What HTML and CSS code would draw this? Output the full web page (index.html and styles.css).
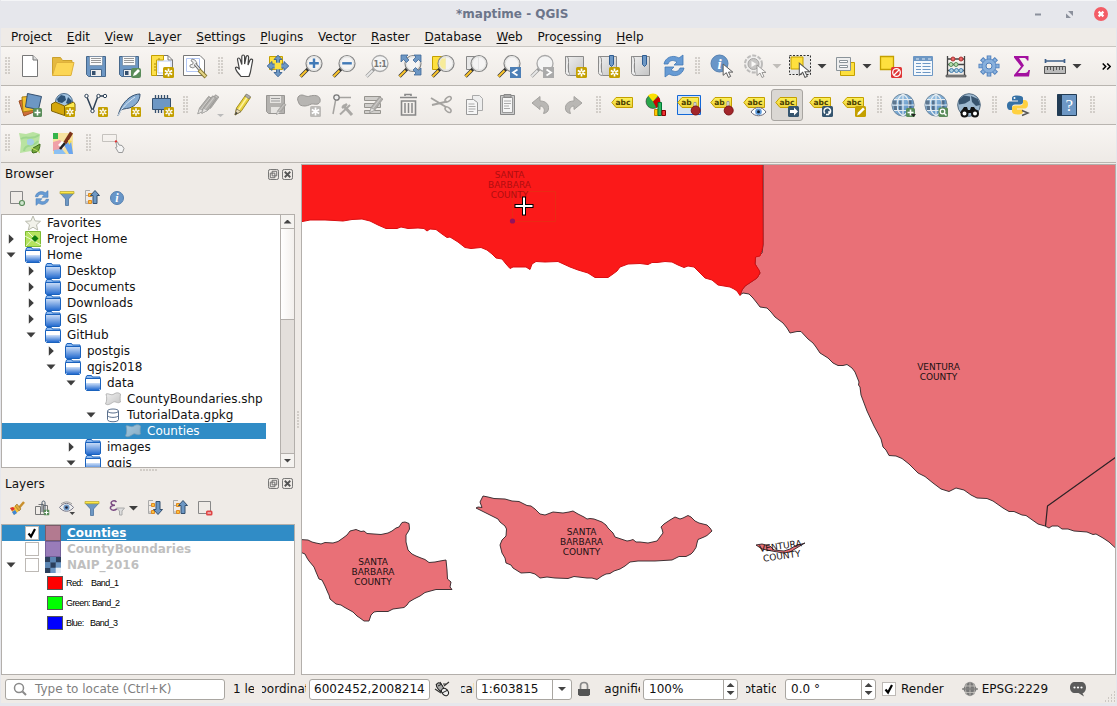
FILE: index.html
```html
<!DOCTYPE html>
<html lang="en">
<head>
<meta charset="utf-8">
<title>*maptime - QGIS</title>
<link rel="stylesheet" href="styles.css">
</head>
<body>
<svg class="defs" width="0" height="0" aria-hidden="true">
  <defs>
    <linearGradient id="gFolder" x1="0" y1="0" x2="0" y2="1"><stop offset="0" stop-color="#cfe0f8"/><stop offset="1" stop-color="#2169cf"/></linearGradient>
    <linearGradient id="gGlobe" x1="0" y1="0" x2="1" y2="1"><stop offset="0" stop-color="#b8d8ee"/><stop offset="1" stop-color="#3c7ab8"/></linearGradient>
    <linearGradient id="gGrey" x1="0" y1="0" x2="1" y2="1"><stop offset="0" stop-color="#f0f0f0"/><stop offset="1" stop-color="#c4c4c4"/></linearGradient>
    <linearGradient id="gTag" x1="0" y1="0" x2="0" y2="1"><stop offset="0" stop-color="#fdf25a"/><stop offset="1" stop-color="#edd03c"/></linearGradient>
  </defs>
  <symbol id="star" viewBox="0 0 11 11"><rect width="11" height="11" rx="1.500" fill="#c4a000"/><path d="M5.500 1.500v8M1.800 3.500l7.400 4M9.200 3.500l-7.400 4" stroke="#fff" stroke-width="1.700"/><circle cx="5.500" cy="5.500" r="1" fill="#c4a000"/></symbol>
  <symbol id="plusb" viewBox="0 0 9 9"><rect width="9" height="9" rx="1.500" fill="#5a8c5a"/><path d="M4.500 1.500v6M1.500 4.500h6" stroke="#fff" stroke-width="1.600"/></symbol>
  <symbol id="floppy" viewBox="0 0 24 24"><path d="M2.500 2.500h19v20H4.500l-2-2z" fill="#6d97c4" stroke="#47688c"/><path d="M5.500 2.500h13v9h-13z" fill="#fafafa" stroke="#667c94" stroke-width=".6"/><path d="M7 4.500h10M7 6.500h10M7 8.500h10" stroke="#999"/><path d="M6.500 15.500h11v7h-11z" fill="#eee" stroke="#47688c"/><path d="M8 17h3.500v4H8z" fill="#35506f"/></symbol>
  <symbol id="handle" viewBox="0 0 24 24"><path d="M1.500 22.500l8-8" stroke="#333" stroke-width="3.400"/><path d="M1.500 22.500l6-6" stroke="#fcc62c" stroke-width="2"/></symbol>
  <symbol id="lens" viewBox="0 0 24 24"><use href="#handle"/><circle cx="15" cy="9.500" r="8" fill="#f4f4f4" fill-opacity=".85" stroke="#858585" stroke-width="1.200"/><circle cx="15" cy="9.500" r="6.700" fill="none" stroke="#e0e0de"/></symbol>
  <symbol id="glens" viewBox="0 0 24 24"><path d="M1.500 22.500l8-8" stroke="#999" stroke-width="3.200"/><path d="M1.500 22.500l6-6" stroke="#e8e8e8" stroke-width="1.800"/><circle cx="15" cy="9.500" r="8" fill="#f4f4f4" stroke="#a8a8a8" stroke-width="1.300"/></symbol>
  <symbol id="refresh" viewBox="0 0 24 24"><path d="M2 10C3 4 10 0 17 4l4-3v10H12l3-3c-5-3-8-1-9 2z" fill="#679bd4" stroke="#4278b5" stroke-width=".8"/><path d="M22 14c-1 6-8 10-15 6l-4 3V13h9l-3 3c5 3 8 1 9-2z" fill="#679bd4" stroke="#4278b5" stroke-width=".8"/></symbol>
  <symbol id="tag" viewBox="0 0 24 24"><path d="M.8 9.500L5 4.500h16.500v10H5z" fill="url(#gTag)" stroke="#c4a000"/></symbol>
  <symbol id="cursor" viewBox="0 0 12 14"><path d="M1 1v10.500l3-2.500 2 4.500 2-1-2-4h4z" fill="#fff" stroke="#555" stroke-width=".9"/></symbol>
  <symbol id="globe" viewBox="0 0 24 24"><circle cx="12" cy="12" r="11.500" fill="#d8dde2"/><circle cx="12" cy="12" r="11" fill="url(#gGlobe)" stroke="#71899e"/><path d="M3 6.500h18M1 12h22M3 17.500h18M12 1v22M12 1C4 6 4 18 12 23M12 1c8 5 8 17 0 22" fill="none" stroke="#e7edf1" stroke-width="1.200"/><path d="M2 7.500h3.500v4H2zM2.500 13h3.500v4H3zM8 7.500h2.500v4H8zM8 13h2.500v4H8zM17.500 7.500h3v4h-3zM17.500 13h3v4h-3z" fill="#39485a" opacity=".6"/></symbol>
  <symbol id="folder" viewBox="0 0 16 16"><path d="M1 4V2l1-1.500h4.500l1 1.500H15v2z" fill="#8ab8f0" stroke="#1a62bd"/><path d="M.5 3.500h15V14.500l-1 1h-13l-1-1z" fill="url(#gFolder)" stroke="#1a62bd"/></symbol>
  <symbol id="folderOpen" viewBox="0 0 16 16"><path d="M1 4V2l1-1.500h4.500l1 1.500H15v2z" fill="#8ab8f0" stroke="#1a62bd"/><path d="M.5 3.500h15V14.500l-1 1h-13l-1-1z" fill="#fff" stroke="#1a62bd"/><path d="M1 8h14v6l-1 1H2l-1-1z" fill="url(#gFolder)"/></symbol>
  <symbol id="poly" viewBox="0 0 16 16"><path d="M1 3c3-1 5 2 8 0s5-1 6.500 0c-.5 4-.5 6 0 8-3 2-5-1-7 0s-5 4-8 2C2 10 2 6 1 3z" fill="url(#gGrey)" stroke="#aaa" stroke-width=".8"/></symbol>
  <symbol id="funnel" viewBox="0 0 16 16"><path d="M1 3h14L9.500 9v6.500h-3V9z" fill="#6d97c4" stroke="#4b739f" stroke-width=".8"/><path d="M1 1.500h14v2.200H1z" fill="#fee746" stroke="#b6a62c" stroke-width=".7"/></symbol>
  <symbol id="right" viewBox="0 0 10 10"><path d="M2.800.3l5 4.700-5 4.700z" fill="#3d3d3d"/></symbol>
  <symbol id="down" viewBox="0 0 10 10"><path d="M.5 2.500h9L5 7.500z" fill="#3d3d3d"/></symbol>
  <symbol id="float" viewBox="0 0 12 12"><rect x=".5" y=".5" width="11" height="11" rx="2" fill="none" stroke="#666"/><path d="M4.500 2.500h5v5h-5zM2.500 4.500h5v5h-5z" fill="none" stroke="#666"/></symbol>
  <symbol id="close" viewBox="0 0 12 12"><rect x=".5" y=".5" width="11" height="11" rx="2" fill="none" stroke="#666"/><path d="M3 3l6 6M9 3L3 9" stroke="#555" stroke-width="2"/></symbol>
  <symbol id="pencil" viewBox="0 0 24 24"><path d="M3 22l1.500-7L14 1.500l4.500 3L9 18.500z" fill="#e8d23e" stroke="#9d8717" stroke-width=".9"/><path d="M6.500 17L16 3" stroke="#fff3a0" stroke-width="1.500"/><path d="M3 22l1.500-6L9 18.500z" fill="#eadcb9" stroke="#6c6450" stroke-width=".7"/><path d="M3 22l1-3 1.800 1z" fill="#333"/><path d="M13 3l1.500-2 4 2.500L17 6z" fill="#aaa" stroke="#777" stroke-width=".7"/></symbol>
  <symbol id="gpencil" viewBox="0 0 24 24"><path d="M1 22l2-7L14 1l4.500 3L8 18.500z" fill="#b0aeab" stroke="#989693"/><path d="M5 16.500L15.500 3" stroke="#cfcdca" stroke-width="1.400"/><path d="M1 22l2-6 5 2.500z" fill="#e6e4e1" stroke="#999" stroke-width=".6"/></symbol>
  <symbol id="treeb" viewBox="0 0 16 16"><path d="M6 .5H1.500v13H6M1.500 5.500H5M1.500 12H5" fill="none" stroke="#aaa"/><path d="M4.500 3.500h3v3h-3zM4.500 10.500h3v3h-3z" fill="#fac43c" stroke="#e08822"/></symbol>
</svg>

<div class="window">
  <header class="titlebar">
    <span class="caption">*maptime - QGIS</span>
    <span class="winbtns">
      <svg width="12" height="14"><path d="M3 7.500h6" stroke="#8b909c" stroke-width="2"/></svg>
      <svg width="12" height="14"><path d="M5 4h5v5zM3 6.500V11h5z" fill="#8b909c"/></svg>
      <svg width="14" height="14"><circle cx="7" cy="7" r="7" fill="#f35d66"/><path d="M4.600 4.600l4.800 4.800M9.400 4.600L4.600 9.400" stroke="#fff" stroke-width="2.200"/></svg>
    </span>
  </header>

  <nav class="menubar">
    <span>Pro<u>j</u>ect</span><span><u>E</u>dit</span><span><u>V</u>iew</span><span><u>L</u>ayer</span><span><u>S</u>ettings</span><span><u>P</u>lugins</span><span>Vect<u>o</u>r</span><span><u>R</u>aster</span><span><u>D</u>atabase</span><span><u>W</u>eb</span><span>Pro<u>c</u>essing</span><span><u>H</u>elp</span>
  </nav>

  <div class="toolbar">
    <i class="grip first"></i>
    <b class="tool"><svg viewBox="0 0 24 24"><path d="M4.500 1.500H15L19.500 6v16.500h-15z" fill="#fff" stroke="#777"/><path d="M15 1.500V6h4.500" fill="#ddd" stroke="#777"/></svg></b>
    <b class="tool"><svg viewBox="0 0 24 24"><path d="M1.500 21V3.500h8l2 3h9.500V12z" fill="#e5b93f" stroke="#caa02d"/><path d="M1.500 21.500l4-13h17.500l-3 13z" fill="#fcd655" stroke="#dfb13b"/></svg></b>
    <b class="tool"><svg viewBox="0 0 24 24"><use href="#floppy"/></svg></b>
    <b class="tool"><svg viewBox="0 0 24 24"><use href="#floppy"/><rect x="14" y="14" width="10" height="10" rx="2" fill="#5a8c5a"/><path d="M16 22l1-3 4-4 2 2-4 4z" fill="#fff"/></svg></b>
    <b class="tool"><svg viewBox="0 0 24 24"><path d="M4.500 1.500H18l4.500 4.500v15.500h-18z" fill="#fff" stroke="#777"/><path d="M18 1.500V6h4.500" fill="none" stroke="#777"/><path d="M8 7h13v12H8z" fill="#fff" stroke="#9eb8f0" stroke-width=".7"/><path d="M1.500 1.500h12v4.500H6.500v15.500h-5z" fill="#fde04b" stroke="#c4a000"/><path d="M4 10h2M4 13h2M4 16h2M9 4v2" stroke="#a88c10"/><use href="#star" x="13" y="13" width="11" height="11"/></svg></b>
    <b class="tool"><svg viewBox="0 0 24 24"><path d="M.5 1.500H17l4.500 4.500v15.500H.5z" fill="#fff" stroke="#777"/><path d="M3.500 4.500h13v13h-13z" fill="none" stroke="#9eb8f0" stroke-width=".8"/><path d="M9 5l3 1 2 3-1 3-3 2-3-1 0-2 3-1 0-2-2-1z" fill="#eee" stroke="#777" stroke-width=".8"/><path d="M12 10l5 6" stroke="#555" stroke-width="3"/><path d="M12 10l5 6" stroke="#ddd" stroke-width="1.500"/><path d="M16 16l7 7" stroke="#8b7b30" stroke-width="4"/><path d="M16.500 16.500l6 6" stroke="#e7d78b" stroke-width="2"/></svg></b>
    <i class="grip g17"></i>
    <b class="tool"><svg viewBox="0 0 24 24"><path d="M8 22.500c-2-3-6-6-5.500-9 1.500-1 3 .5 4 2L4.500 5.500c0-2 2-2 2.700 0l1.600 5V2.500c.2-2 2.600-2 2.800 0v7.500l1.500-7c.5-2 2.600-1.600 2.500.2L15 11l2-5c.8-1.600 3-1 2.600.6L18 15c-.3 3-1 5-2 7.500z" fill="#fff" stroke="#444" stroke-width="1.200"/></svg></b>
    <b class="tool"><svg viewBox="0 0 24 24"><path d="M3.500 2.500h13v13h-13z" fill="#fee03e" stroke="#c4a000"/><path d="M12 1.200l4 4.300h-2.500V10H18V7.500l4.800 4.500-4.800 4.500V14h-4.500v4.500H16l-4 4.300-4-4.300h2.500V14H6v2.500L1.200 12 6 7.500V10h4.500V5.500H8z" fill="#6d97c4" stroke="#3a6292" stroke-width=".9"/><path d="M8.700 8.700h6.600v6.600H8.700z" fill="#fee03e"/></svg></b>
    <b class="tool"><svg viewBox="0 0 24 24"><use href="#lens"/><path d="M15 4.500v9.500M10.200 9.300h9.600" stroke="#417ab7" stroke-width="2.400"/></svg></b>
    <b class="tool"><svg viewBox="0 0 24 24"><use href="#lens"/><path d="M10.200 9.300h9.600" stroke="#417ab7" stroke-width="2.400"/></svg></b>
    <b class="tool"><svg viewBox="0 0 24 24"><use href="#glens"/><text x="15" y="12.500" class="one">1:1</text></svg></b>
    <b class="tool"><svg viewBox="0 0 24 24"><use href="#lens"/><path d="M3 1h7L8 3l3 3-2.500 2.500-3-3L3 8zM23 1h-7l2 2-3 3 2.500 2.500 3-3L23 8zM23 21h-7l2-2-3-3 2.500-2.500 3 3L23 14z" fill="#6d97c4" stroke="#3f6797" stroke-width=".8"/></svg></b>
    <b class="tool"><svg viewBox="0 0 24 24"><path d="M1.500 2.500h13v13h-13z" fill="#fee03e" stroke="#c4a000"/><use href="#lens"/><path d="M11 4.500h3.500v10.500c-3 0-5-1.500-5.700-5C9 7 10 5.500 11 4.500z" fill="#f7ec9a"/></svg></b>
    <b class="tool"><svg viewBox="0 0 24 24"><path d="M2.500 2.500h12v13h-12z" fill="#e8e8e8" stroke="#888"/><use href="#lens"/></svg></b>
    <b class="tool"><svg viewBox="0 0 24 24"><use href="#lens"/><path d="M13 13h11v11H13z" fill="#4d7fb6"/><path d="M20.500 15.500L16 18.500l4.500 3" fill="none" stroke="#fff" stroke-width="1.800"/></svg></b>
    <b class="tool"><svg viewBox="0 0 24 24"><use href="#glens"/><path d="M13 13h11v11H13z" fill="#aaa"/><path d="M16.500 15.500l4.500 3-4.500 3" fill="none" stroke="#fff" stroke-width="1.800"/></svg></b>
    <b class="tool"><svg viewBox="0 0 24 24"><path d="M2.500 2.500h18v19h-14z" fill="url(#gGrey)" stroke="#8a8a8a"/><path d="M2.500 2.500c3 0 3 2 3 6v10M2.500 2.500v16c0 2 2 3 4 3" fill="#eee" stroke="#8a8a8a"/><use href="#star" x="13" y="13" width="11" height="11"/></svg></b>
    <b class="tool"><svg viewBox="0 0 24 24"><path d="M2.500 2.500h18v19h-14z" fill="url(#gGrey)" stroke="#8a8a8a"/><path d="M2.500 2.500c3 0 3 2 3 6v10M2.500 2.500v16c0 2 2 3 4 3" fill="#eee" stroke="#8a8a8a"/><path d="M13.500 1.500h4v9l-2 2-2-2z" fill="#6d97c4" stroke="#2e5c91"/><use href="#star" x="13" y="13" width="11" height="11"/></svg></b>
    <b class="tool"><svg viewBox="0 0 24 24"><path d="M2.500 2.500h18v19h-14z" fill="url(#gGrey)" stroke="#8a8a8a"/><path d="M2.500 2.500c3 0 3 2 3 6v10M2.500 2.500v16c0 2 2 3 4 3" fill="#eee" stroke="#8a8a8a"/><path d="M13.500 1.500h4v9l-2 2-2-2z" fill="#6d97c4" stroke="#2e5c91"/></svg></b>
    <b class="tool"><svg viewBox="0 0 24 24"><use href="#refresh"/></svg></b>
    <i class="grip g15"></i>
    <b class="tool"><svg viewBox="0 0 24 24"><circle cx="9.500" cy="9.500" r="8.500" fill="#6896c8" stroke="#5580b0"/><text x="9.500" y="15" class="info">i</text><use href="#cursor" x="12" y="9" width="13" height="15"/></svg></b>
    <b class="tool"><svg viewBox="0 0 24 24" opacity=".6"><circle cx="10.500" cy="10" r="8.500" fill="#eee" stroke="#999" stroke-width="2" stroke-dasharray="4 1.500"/><circle cx="10.500" cy="10" r="5.500" fill="#aaa" stroke="#777"/><path d="M8.500 7l5 3-5 3z" fill="#fff"/><use href="#cursor" x="13" y="10" width="12" height="14"/></svg></b>
    <i class="drop off"></i>
    <b class="tool"><svg viewBox="0 0 24 24"><path d="M1.500 1.500h21v19h-21z" fill="#e5e5e5" stroke="#333" stroke-dasharray="2 1.500"/><path d="M3 3h12v12H3z" fill="#fee03e" stroke="#c4a000"/><use href="#cursor" x="10" y="8" width="14" height="16"/></svg></b>
    <i class="drop"></i>
    <b class="tool"><svg viewBox="0 0 24 24"><path d="M7.500 8.500h14v13h-14z" fill="#fee03e" stroke="#c4a000"/><path d="M3.500 3.500h14v13h-14z" fill="#eee" stroke="#8a9399"/><path d="M6.500 6.500h8v2h-8zM6.500 11.500h8v2h-8z" fill="#fff" stroke="#8a9399"/></svg></b>
    <i class="drop"></i>
    <b class="tool"><svg viewBox="0 0 24 24"><path d="M2.500 2.500h13v13h-13z" fill="#fee03e" stroke="#c4a000" stroke-width="1.300"/><rect x="13" y="13" width="11" height="11" rx="1.500" fill="#df3535"/><circle cx="18.500" cy="18.500" r="3.800" fill="none" stroke="#fff" stroke-width="1.300"/><path d="M16 21l5-5" stroke="#fff" stroke-width="1.300"/></svg></b>
    <b class="tool"><svg viewBox="0 0 24 24"><path d="M2.500 2.500h19v19h-19z" fill="#f4f8fc" stroke="#6d97c4"/><path d="M3 3h18v4H3z" fill="#6d97c4"/><path d="M5 5h3M11 5h3M17 5h3" stroke="#dfeaf5"/><path d="M5 9.500h5M5 12.500h5M5 15.500h5M5 18.500h5M11.500 9.500h8M11.500 12.500h8M11.500 15.500h8M11.500 18.500h8" stroke="#6d97c4"/></svg></b>
    <b class="tool"><svg viewBox="0 0 24 24"><path d="M3.500 2v20M20.500 2v20M3 5h18M3 10.500h18M3 16.500h18" fill="none" stroke="#444" stroke-width="1.300"/><path d="M2 21h20v2H2z" fill="#888" stroke="#444" stroke-width=".6"/><circle cx="9" cy="5" r="2" fill="#e66" stroke="#a33"/><circle cx="17" cy="5" r="2" fill="#e66" stroke="#a33"/><circle cx="7" cy="10.500" r="2" fill="#b7dfb0" stroke="#5a8c5a"/><circle cx="12" cy="10.500" r="2" fill="#b7dfb0" stroke="#5a8c5a"/><circle cx="7.500" cy="16.500" r="2" fill="#acd" stroke="#4682b4"/><circle cx="12.500" cy="16.500" r="2" fill="#acd" stroke="#4682b4"/><circle cx="17" cy="16.500" r="2" fill="#acd" stroke="#4682b4"/></svg></b>
    <b class="tool"><svg viewBox="0 0 24 24"><path d="M12 1.500v21M1.500 12h21M4.600 4.600l14.800 14.800M19.400 4.600L4.600 19.400" stroke="#4d7ebb" stroke-width="4.600"/><path d="M12 2.300v19.400M2.300 12h19.400M5.200 5.200l13.600 13.600M18.800 5.200L5.200 18.800" stroke="#88b0dc" stroke-width="2.800"/><circle cx="12" cy="12" r="7" fill="#88b0dc" stroke="#4d7ebb" stroke-width=".7"/><circle cx="12" cy="12" r="3" fill="#f3f0ec" stroke="#4d7ebb"/></svg></b>
    <b class="tool"><svg viewBox="0 0 24 24"><path d="M4 2h14.500v4.500H17C16.500 4.500 15.500 4 13 4H9l5 7.500L8 19h7c2 0 3-1 3.500-3H20l-1 6.500H4V21l7-8.500L4 3.500z" fill="#a3109f"/></svg></b>
    <b class="tool"><svg viewBox="0 0 24 24"><path d="M2 7h20M2.500 5v4M21.500 5v4" stroke="#3d5f89" stroke-width="1.700"/><path d="M1.500 12.500h21v7h-21z" fill="#bbb" stroke="#555"/><path d="M4.500 13v3M7.500 13v3M10.500 13v4M13.500 13v3M16.500 13v3M19.500 13v3" stroke="#555"/></svg></b>
    <i class="drop"></i>
    <span class="more"><svg width="9" height="7"><path d="M.7.500l3 3-3 3M5.200.500l3 3-3 3" fill="none" stroke="#000" stroke-width="1.500"/></svg></span>
  </div>

  <div class="toolbar">
    <i class="grip first"></i>
    <b class="tool"><svg viewBox="0 0 24 24"><path d="M1 8l7-2 8 13-10 4z" fill="#cf6e3a" stroke="#9c4d23"/><path d="M4 4l12-1 1 14-12 2z" fill="#f4c12f" stroke="#a77c10"/><path d="M9.500.5l14 3-3 13-13-2.500z" fill="#6d97c4" stroke="#35506f"/><use href="#plusb" x="15" y="15" width="9" height="9"/></svg></b>
    <b class="tool"><svg viewBox="0 0 24 24"><circle cx="13" cy="9" r="8.500" fill="#a3c5e3" stroke="#4e6d8b"/><path d="M6 6l4-4 4 1 1 4-4 3-4-1zM17 4l4 4-2 4-4-2z" fill="#2e5377"/><path d="M.5 11l4-2 9 4v9.500L.5 18z" fill="#d5a70b" stroke="#7f6307"/><path d="M13.500 13l9-4 1.500 2v7l-10.500 4.500z" fill="#fce94f" stroke="#7f6307"/><use href="#star" x="14" y="14" width="10" height="10"/></svg></b>
    <b class="tool"><svg viewBox="0 0 24 24"><path d="M2.500 3l6 15L14 3h7" fill="none" stroke="#2f4257" stroke-width="1.500"/><g fill="#fff" stroke="#2f4257"><circle cx="2.500" cy="3" r="1.700"/><circle cx="8.500" cy="18" r="1.700"/><circle cx="14.500" cy="3" r="1.700"/><circle cx="21" cy="3" r="1.700"/></g><use href="#star" x="14" y="14" width="10" height="10"/></svg></b>
    <b class="tool"><svg viewBox="0 0 24 24"><path d="M1 23C3 15 6 10 12 5c4-3 8-4 11-4 0 6-3 10-8 13-4 2-7 1-11 3z" fill="#88add2" stroke="#35506f"/><path d="M1 23C5 14 11 9 18 4" fill="none" stroke="#dde9f4"/><use href="#star" x="14" y="14" width="10" height="10"/></svg></b>
    <b class="tool"><svg viewBox="0 0 24 24"><path d="M5.500 2v18M8.500 2v18M11.500 2v18M14.500 2v18M17.500 2v18" stroke="#35506f" stroke-width="1.300"/><path d="M2.500 5.500h18v11h-18z" fill="#6d97c4" stroke="#35506f"/><use href="#star" x="14" y="14" width="10" height="10"/></svg></b>
    <i class="grip g15"></i>
    <b class="tool"><svg viewBox="0 0 24 24"><use href="#gpencil" x="-1" y="2" width="20" height="21"/><use href="#gpencil" x="7" y="0" width="18" height="20"/><use href="#gpencil" x="3" y="1" width="20" height="22"/><path d="M19 21h7l-3.500 3z" fill="#bbb"/></svg></b>
    <b class="tool"><svg viewBox="0 0 24 24"><use href="#pencil" x="1"  width="24" height="24"/></svg></b>
    <b class="tool"><svg viewBox="0 0 24 24"><path d="M2.500 2.500h18v18h-16l-2-2z" fill="#b4b2af" stroke="#989693"/><path d="M6 3h11v7H6zM7 14h10v6H7z" fill="#e6e4e1"/><path d="M7 5.500h9M7 8h9" stroke="#999"/><use href="#gpencil" x="12" y="9" width="13" height="14"/></svg></b>
    <b class="tool"><svg viewBox="0 0 24 24"><path d="M2 3c4-3 7 2 11 0 4-1 9-1 10 3s-2 6-6 5c-3-1-5 2-9 2S2 12 1.500 9C0 7 .5 4 2 3z" fill="#b7b5b2" stroke="#989693"/><rect x="13" y="13" width="11" height="11" rx="1.500" fill="#bdbbb8"/><path d="M18.500 14.500v8M14.800 16.500l7.400 4M22.200 16.500l-7.400 4" stroke="#fff" stroke-width="1.700"/></svg></b>
    <b class="tool"><svg viewBox="0 0 24 24"><path d="M6 5L3 21M6 4.500h15" stroke="#a5a3a0" stroke-width="1.500"/><circle cx="6.500" cy="4.500" r="2.700" fill="#eee" stroke="#777" stroke-width="1.300"/><path d="M10 21.500L20 12" stroke="#aaa8a5" stroke-width="1.800"/><path d="M13 12l9 10" stroke="#aaa8a5" stroke-width="3"/><path d="M12 15l5-4" stroke="#aaa8a5" stroke-width="2.500"/></svg></b>
    <b class="tool"><svg viewBox="0 0 24 24"><path d="M1.500 3.500h16v4h-16zM1.500 10.500h16v4h-16zM1.500 17.500h16v3h-16z" fill="#d0cecb" stroke="#96948f"/><use href="#gpencil" x="6" y="1" width="18" height="22"/></svg></b>
    <b class="tool"><svg viewBox="0 0 24 24"><path d="M9 3V1.500h6V3M4 4.500h17" fill="none" stroke="#888" stroke-width="1.600"/><path d="M5.500 8h14v14h-14z" fill="none" stroke="#888" stroke-width="1.600"/><path d="M9 10v10M12.500 10v10M16 10v10" stroke="#888" stroke-width="1.500"/></svg></b>
    <b class="tool"><svg viewBox="0 0 24 24"><path d="M2 5l15 9M3 12l15-3.500" stroke="#a5a3a0" stroke-width="1.900"/><ellipse cx="19.500" cy="6.500" rx="3.500" ry="2" transform="rotate(-35 19 7)" fill="none" stroke="#a5a3a0" stroke-width="1.500"/><ellipse cx="19.500" cy="16.500" rx="3.500" ry="2" transform="rotate(40 19 16)" fill="none" stroke="#a5a3a0" stroke-width="1.500"/></svg></b>
    <b class="tool"><svg viewBox="0 0 24 24"><path d="M10.500 2.500h7l3 3v12h-10z" fill="#eee" stroke="#aaa"/><path d="M4.500 6.500h7l4 3v12h-11z" fill="#f6f6f6" stroke="#999"/><path d="M6.500 11h6M6.500 13.500h7M6.500 16h7M6.500 18.500h5" stroke="#aaa"/></svg></b>
    <b class="tool"><svg viewBox="0 0 24 24"><path d="M5.500 2.500h14v19h-14z" fill="#ccc" stroke="#888"/><path d="M7.500 4.500h10v15h-10z" fill="#f6f6f6" stroke="#999"/><path d="M9 1.500h7v3H9z" fill="#aaa" stroke="#888"/><path d="M9 8h7M9 10.500h7M9 13h5M9 15.500h6" stroke="#aaa"/></svg></b>
    <b class="tool"><svg viewBox="0 0 24 24"><path d="M4 10l8-6.500V8c6 0 9 3.500 8.500 8-.5 3-2.500 4-5 4.500 2-4 0-7.500-3.500-7.500V16.500z" fill="#b9b7b4" stroke="#a5a3a0"/></svg></b>
    <b class="tool"><svg viewBox="0 0 24 24"><path d="M21 10l-8-6.500V8c-6 0-9 3.500-8.500 8 .5 3 2.500 4 5 4.500-2-4 0-7.500 3.500-7.500V16.500z" fill="#b9b7b4" stroke="#a5a3a0"/></svg></b>
    <i class="grip g17"></i>
    <b class="tool"><svg viewBox="0 0 24 24"><use href="#tag" width="24" height="24"/><text x="12" y="12" class="abc">abc</text></svg></b>
    <b class="tool"><svg viewBox="0 0 24 24"><circle cx="9" cy="8.500" r="7" fill="#2aa64a" stroke="#333" stroke-width=".6"/><path d="M9 8.500L4 2.500a7 7 0 0 1 10 0z" fill="#fce000"/><path d="M9 8.500l5.500-5a7.500 7.500 0 0 1-2 11.500z" fill="#c00"/><path d="M10.500 16.500h3.500v6h-3.500z" fill="#fcc800" stroke="#c80"/><path d="M14 9.500h3.500v13H14z" fill="#2cb560" stroke="#073"/><path d="M18 17.500h3.500v5H18z" fill="#e33" stroke="#800"/></svg></b>
    <b class="tool"><svg viewBox="0 0 24 24"><path d="M.5 2.500h23v19H.5z" fill="#d6e3f1" stroke="#1268d8"/><use href="#tag" width="24" height="24"/><text x="9.500" y="12" class="abc">ab</text><path d="M17 14V9.500h2V15" fill="#fff" stroke="#999"/><circle cx="18.700" cy="17.500" r="4.500" fill="#a3252a" stroke="#7c1518"/></svg></b>
    <b class="tool"><svg viewBox="0 0 24 24"><use href="#tag" width="24" height="24"/><text x="9.500" y="12" class="abc">ab</text><path d="M17 14V8.500h2V15" fill="#fff" stroke="#999"/><circle cx="18.700" cy="17.500" r="4.500" fill="#a3252a" stroke="#7c1518"/></svg></b>
    <b class="tool"><svg viewBox="0 0 24 24"><use href="#tag" width="24" height="24"/><text x="12" y="12" class="abc">abc</text><path d="M8 19c4-6 11-6 15 0-4 5-11 5-15 0z" fill="#fff" stroke="#667"/><circle cx="15.500" cy="18.700" r="3.300" fill="#5f9bdb"/><circle cx="15.500" cy="18.700" r="1.500" fill="#123"/></svg></b>
    <b class="tool on"><svg viewBox="0 0 24 24"><use href="#tag" width="24" height="24"/><text x="12" y="12" class="abc">abc</text><rect x="13" y="13" width="11" height="11" rx="1.500" fill="#35556f"/><path d="M15 17h4v-2.500l4 4-4 4V20h-4z" fill="#fff"/></svg></b>
    <b class="tool"><svg viewBox="0 0 24 24"><use href="#tag" width="24" height="24"/><text x="12" y="12" class="abc">abc</text><rect x="13" y="13" width="11" height="11" rx="1.500" fill="#35556f"/><path d="M16 20.500a3.300 3.300 0 1 1 4 .5v-3M20 21.500h-3" fill="none" stroke="#fff" stroke-width="1.400"/></svg></b>
    <b class="tool"><svg viewBox="0 0 24 24"><use href="#tag" width="24" height="24"/><text x="12" y="12" class="abc">abc</text><rect x="13" y="13" width="11" height="11" rx="1.500" fill="#c4a000"/><path d="M15 22.500l1-3 5-5 1.800 1.800-5 5z" fill="#fff"/></svg></b>
    <i class="grip g16"></i>
    <b class="tool"><svg viewBox="0 0 24 24"><use href="#globe"/><use href="#plusb" x="15" y="15" width="9" height="9"/><path d="M20 21h5l-2.500 3z" fill="#222"/></svg></b>
    <b class="tool"><svg viewBox="0 0 24 24"><use href="#globe"/><rect x="14.500" y="14.500" width="9.500" height="9.500" rx="1.500" fill="#5a8c5a"/><circle cx="18.500" cy="18.500" r="2.300" fill="none" stroke="#fff" stroke-width="1.300"/><path d="M20 20l2.500 2.500" stroke="#fff" stroke-width="1.500"/></svg></b>
    <b class="tool"><svg viewBox="0 0 24 24"><circle cx="12" cy="12" r="11.300" fill="#9db8cf" stroke="#526a80"/><path d="M2 6.500l5-4 6 1v4l-5 3-6 1zM14 3l7 3 2 6-4 1-4-4z" fill="#27425d" opacity=".85"/><path d="M3 20l4-6h3l1 3h2l1-3h3l4 6" fill="#111"/><circle cx="7.500" cy="20.500" r="3" fill="#fff" stroke="#111" stroke-width="2"/><circle cx="18" cy="20.500" r="3" fill="#fff" stroke="#111" stroke-width="2"/></svg></b>
    <i class="grip g16"></i>
    <b class="tool"><svg viewBox="0 0 24 24"><path d="M11 2.500c-4 0-5 1-5 3V7.500h6v1H4.500c-3 0-3.500 2.500-3.500 4.500s1 4 3 4h2v-2.500c0-2 1-3 3-3h5c2 0 3-1 3-2.500V5c0-1.500-2-2.500-6-2.500z" fill="#3671a5"/><path d="M12 21.500c4 0 5-1 5-3V16.500h-6v-1h7.500c3 0 3.500-2.500 3.500-4.500s-1-4-3.500-4h-1.500V9.500c0 2-1 3-3 3h-5c-2 0-3 1-3 2.500v3.500c0 2 2 3 6 3z" fill="#ffd140"/><circle cx="8.500" cy="5" r="1" fill="#fff"/><path d="M16 17.500l6 2.500-6 2.500" fill="none" stroke="#555" stroke-width="1.400"/></svg></b>
    <i class="grip g16"></i>
    <b class="tool"><svg viewBox="0 0 24 24"><path d="M2.500 1.500h19v21h-19z" fill="#6d97c4" stroke="#223c55"/><path d="M2.500 1.500h4.500v21H2.500z" fill="#223c55"/><text x="14.300" y="18" class="help">?</text></svg></b>
    <i class="grip g16"></i>
  </div>

  <div class="toolbar third">
    <i class="grip first"></i>
    <b class="tool"><svg viewBox="0 0 24 24"><path d="M1 2l7 1 7-2 7 2-1 9 1 9-9-1-11 2 1-10z" fill="#b9e3a1"/><path d="M3 8c5-4 10 2 18-4M6 20c1-8 9-3 14-10" stroke="#9ed68e" fill="none" stroke-width="2"/><path d="M9 9c4-3 8 0 7 3s-5 3-7 1z" fill="#a5cfe6"/><path d="M14 21c0-3 1-5 3-5l5-3c0 4-1 6-3 8l-4 1z" fill="#74a83c" stroke="#3f6b1b"/><path d="M13 17l5 2 4 3" stroke="#c5dd62" fill="none"/></svg></b>
    <b class="tool"><svg viewBox="0 0 24 24"><path d="M2 2h20v21H2z" fill="#f7e3a0"/><path d="M2 2h5v6H2z" fill="#34b44a"/><path d="M2 11l7-2 5 6-4 5H2z" fill="#f0a0a8"/><path d="M7 14l4-4 4 3-3 5z" fill="#fff"/><path d="M13 14l7-4 2 13h-4z" fill="#6aa5f0"/><path d="M3 19l8-1 4 5H3z" fill="#8cc0f2"/><path d="M20.500 1.500L14 12" stroke="#7c331b" stroke-width="3.600"/><path d="M14 12l-5 6" stroke="#222" stroke-width="2.600"/><path d="M17 9l4 1-3 4z" fill="#f4dc52"/></svg></b>
    <i class="grip g17"></i>
    <b class="tool"><svg viewBox="0 0 24 24"><path d="M1.500 3.500h14v7h-14z" fill="none" stroke="#c5c2be"/><circle cx="15" cy="10.500" r="1.200" fill="#d33"/><path d="M15 12l1 4-1.500.5 3 5h4l1.500-4-2-3-3-.5-1.500-3z" fill="#f4f4f4" stroke="#999"/></svg></b>
  </div>

  <main class="work">
    <aside class="side">
      <div class="dockhead"><span>Browser</span><svg><use href="#float"/></svg><svg><use href="#close"/></svg></div>
      <div class="docktools">
        <svg viewBox="0 0 16 16"><path d="M1.500 1.500h12v12h-12z" fill="none" stroke="#888"/><circle cx="13" cy="13" r="2.500" fill="#cfe5cf" stroke="#5a8c5a" stroke-width="1.200"/></svg>
        <svg viewBox="0 0 24 24"><use href="#refresh"/></svg>
        <svg viewBox="0 0 16 16"><use href="#funnel"/></svg>
        <svg viewBox="0 0 16 16"><use href="#treeb"/><path d="M11 .5l4.500 5H13v8H9v-8H6.500z" fill="#6d97c4" stroke="#35506f"/></svg>
        <svg viewBox="0 0 16 16"><circle cx="8" cy="8" r="6.500" fill="#6896c8" stroke="#5580b0"/><text x="8" y="12.300" class="info small">i</text></svg>
      </div>
      <section class="browser">
        <div class="tree">
          <div class="row l0"><i class="tw"></i><svg class="ic" viewBox="0 0 16 16"><path d="M8 1l2.100 4.900 5.400.4-4 3.500 1.200 5.200L8 12.200 3.300 15l1.200-5.200-4-3.500 5.400-.4z" fill="#f2f2ea" stroke="#b9bbae"/></svg>Favorites</div>
          <div class="row l0"><svg class="tw"><use href="#right"/></svg><svg class="ic" viewBox="0 0 16 16"><path d="M.5.500h15v15H.5z" fill="#b4e35e" stroke="#7dbb33"/><path d="M0 5l16 9M1 15L11 4M3 1l6 6" stroke="#e9f7cf"/><path d="M10 4l3.500 3.500L10 11 6.500 7.500z" fill="#0d7d0d"/></svg>Project Home</div>
          <div class="row l0"><svg class="tw"><use href="#down"/></svg><svg class="ic"><use href="#folderOpen"/></svg>Home</div>
          <div class="row l1"><svg class="tw"><use href="#right"/></svg><svg class="ic"><use href="#folder"/></svg>Desktop</div>
          <div class="row l1"><svg class="tw"><use href="#right"/></svg><svg class="ic"><use href="#folder"/></svg>Documents</div>
          <div class="row l1"><svg class="tw"><use href="#right"/></svg><svg class="ic"><use href="#folder"/></svg>Downloads</div>
          <div class="row l1"><svg class="tw"><use href="#right"/></svg><svg class="ic"><use href="#folder"/></svg>GIS</div>
          <div class="row l1"><svg class="tw"><use href="#down"/></svg><svg class="ic"><use href="#folderOpen"/></svg>GitHub</div>
          <div class="row l2"><svg class="tw"><use href="#right"/></svg><svg class="ic"><use href="#folder"/></svg>postgis</div>
          <div class="row l2"><svg class="tw"><use href="#down"/></svg><svg class="ic"><use href="#folderOpen"/></svg>qgis2018</div>
          <div class="row l3"><svg class="tw"><use href="#down"/></svg><svg class="ic"><use href="#folderOpen"/></svg>data</div>
          <div class="row l4"><i class="tw"></i><svg class="ic"><use href="#poly"/></svg>CountyBoundaries.shp</div>
          <div class="row l4"><svg class="tw"><use href="#down"/></svg><svg class="ic" viewBox="0 0 16 16"><path d="M2.500 4v8.500c0 3 11 3 11 0V4" fill="#fff" stroke="#5a6f8c"/><ellipse cx="8" cy="4" rx="5.500" ry="2" fill="#fff" stroke="#5a6f8c"/><path d="M2.500 8.500c1 2.500 10 2.500 11 0" fill="none" stroke="#5a6f8c"/></svg>TutorialData.gpkg</div>
          <div class="row l5 sel"><i class="tw"></i><svg class="ic dim"><use href="#poly"/></svg>Counties</div>
          <div class="row l3"><svg class="tw"><use href="#right"/></svg><svg class="ic"><use href="#folder"/></svg>images</div>
          <div class="row l3"><svg class="tw"><use href="#down"/></svg><svg class="ic"><use href="#folderOpen"/></svg>qgis</div>
        </div>
        <div class="scroll"><span class="sbtn"><i class="up"></i></span><span class="thumb"></span><span class="sbtn end"><i class="dn"></i></span></div>
      </section>
      <div class="hsplit"></div>
      <div class="dockhead second"><span>Layers</span><svg><use href="#float"/></svg><svg><use href="#close"/></svg></div>
      <div class="docktools layers">
        <svg viewBox="0 0 16 16"><path d="M1 8l6-2 3 5-5 4z" fill="#f5c33b"/><path d="M1 8l3-1 2 2-3 2z" fill="#d33"/><path d="M3 12l3-2 2 3-3 2z" fill="#3d86d8"/><path d="M15 2L9 9" stroke="#c98f2c" stroke-width="2.500"/><path d="M6 6l4 5 2-2-4-5z" fill="#dfaa3c" stroke="#96691b" stroke-width=".6"/></svg>
        <svg viewBox="0 0 16 16"><path d="M1.500 6.500h5v8h-5zM4.500 4.500h5v8M9.500 5.500h4v9h-8" fill="none" stroke="#777"/><path d="M8 12V2.500c0-2 3-2 3 0V11" fill="none" stroke="#456"/><use href="#plusb" x="9.500" y="9.500" width="6" height="6"/></svg>
        <svg viewBox="0 0 16 16"><path d="M.5 7.500c4-5.500 10-5.500 14 0-4 5-10 5-14 0z" fill="#eee" stroke="#778"/><circle cx="7.500" cy="7.500" r="3" fill="#6f9ac8"/><circle cx="7.500" cy="7.500" r="1.300" fill="#223"/><path d="M2 4c4-3 8-2.500 11 0" fill="none" stroke="#999"/><path d="M10.500 12h5.500l-2.700 3z" fill="#444"/></svg>
        <svg viewBox="0 0 16 16"><use href="#funnel"/></svg>
        <svg viewBox="0 0 16 16"><path d="M7.500 2C5-.5 1 1.500 2.500 4c.6 1 2 1.300 3.500 1.300C3 5.300 1 6.500 1.500 8.500c1 2.500 5 2 6.500 0" fill="none" stroke="#7a4a82" stroke-width="1.500"/><path d="M7.500 8h8L13 11v4h-2.500v-4z" fill="#ddd" stroke="#aaa"/></svg>
        <i class="drop"></i>
        <svg viewBox="0 0 16 16"><use href="#treeb"/><path d="M11 14.500L6.500 9.500H9v-8h4v8h2.500z" fill="#6d97c4" stroke="#35506f"/></svg>
        <svg viewBox="0 0 16 16"><use href="#treeb"/><path d="M11 .5l4.500 5H13v8H9v-8H6.500z" fill="#6d97c4" stroke="#35506f"/></svg>
        <svg viewBox="0 0 16 16"><path d="M1.500 1.500h12v12h-12z" fill="none" stroke="#888"/><rect x="9" y="10.500" width="6.500" height="5" rx="1.500" fill="#df4545"/><path d="M10.500 13h3.500" stroke="#fff"/></svg>
      </div>
      <section class="layertree">
        <div class="lrow act"><i class="tw"></i><span class="chk on"><svg viewBox="0 0 12 12"><path d="M2.500 6.500l2.500 3L9 2" fill="none" stroke="#000" stroke-width="2.200"/></svg></span><i class="sw rose"></i><u>Counties</u></div>
        <div class="lrow"><i class="tw"></i><span class="chk"></span><i class="sw violet"></i>CountyBoundaries</div>
        <div class="lrow"><svg class="tw"><use href="#down"/></svg><span class="chk"></span><svg class="ic" viewBox="0 0 16 16"><path d="M0 0h16v16H0z" fill="#6d97c4"/><path d="M0 0h5.300v5.300H0zM10.700 0H16v5.300h-5.300zM5.300 5.300h5.400v5.400H5.300zM0 10.700h5.300V16H0z" fill="#2b3f5c"/><path d="M5.300 0h5.400v5.300H5.300zM0 5.300h5.300v5.400H0z" fill="#5c86b4"/><path d="M10.700 10.700H16V16h-5.300z" fill="#e9f0f7"/></svg>NAIP_2016</div>
        <div class="band"><i class="cb red"></i><span class="nm">Red:</span><span>Band_1</span></div>
        <div class="band"><i class="cb green"></i><span class="nm g">Green:</span><span>Band_2</span></div>
        <div class="band"><i class="cb blue"></i><span class="nm b">Blue:</span><span>Band_3</span></div>
      </section>
    </aside>
    <div class="vsplit"><i></i></div>
    <div class="canvas">
      <svg viewBox="302 165 813 509" width="813" height="509">
        <g fill="#e97077" stroke="#2d2226" stroke-width=".9" stroke-linejoin="round">
          <path d="M763 160V240L763 245 762 253 755.500 257 755 264 760 273 757 278 745 286 742 290 740 295 743 293 749 294 753 298 757 303 760 307 767 308 771 312 775 317 783 323 787 328 790 333 797 331.500 801 331.500 808 339 813 343 816 347 820 353 828 358 833 363 838 365.500 843 365.500 847 364.500 852 368 855 372 859 382 858.500 385 860 387 861 395 867 411 874 426 881 439 883 447 886 450 889 455.500 896 456 902 458.500 909 464 918 473 925 476.500 933 483 941 489 949 491.500 956 488 964 490 971 495 977 498 987 498.500 993 501 1003 508 1009 511.500 1014 511.500 1022 515 1026 515.500 1038 524 1045 526 1049 528 1052 526 1058 526 1062 529 1068 529 1074 531 1087 532 1093 534.500 1096 534 1103 538 1109 542 1116 548.500 1125 549V160z"/>
          <path d="M1116 457L1047.500 506l-2 20" fill="none" stroke-width="1.200"/>
          <path d="M300 539.500L308 540 312 542 316 543 321 544 325 542.500 333 543 338 541.500 343 538 347 535 350 531 356 529.500 361 531.500 364 531 367 533.500 381 534.500 388 533 392 531 396 528 399 527 402 522.500 405 522 409 523.500 409.500 529 408 532 406 535 406 542 408 550 412 554 416 556 421 558 425 559.500 429 562.500 435 562 440 561 446 560 447 570 447.500 579 451 582 450 587 452 589.500 436 589.500 425 592.500 420 596 414 599 409 602 407 605 404 607.500 393 609 388 611.500 377 611.500 374 612 371 615 369 621 364 621 360 618 357 616 353 612 344 607 341 605 336 604 330 599 329 595 328 593 325 586 322 580 319 579 316 572 314 567 309 561 307 558 305 554 300 552z"/>
          <path d="M476 508L478 507 482 507.500 480 502 483 496 488 497 494 498.500 505 499 512 501 519 501.500 527 505.500 531 506 535 509 540 514 545 515 549 513.500 553 512 563 513 569 512 573 511 578 514 584 517 587 519 590 518.500 594 519 602 522 606 525 608 528 613 533 615 537 621 539 627 541 630 540.500 633 539.500 636 542 640 542 648 543 657 541 660 537 663 533 662 529 661 527 664 524 670 520 675 517 680 519 683 518 688 515.500 691 517 695 521 699 523 707 525 710 528 712 531 707 535.500 704 537 698 539.500 697 543 696 547.500 693 552 691 554 686 556.500 679 556.500 672 560 655 561 638 561 630 562 625 566 620 569 614 571 610 573.500 606 574 602 576 597 579.500 592 578 587 578 574 576.500 568 578.500 555 578 547 577 540 578 535 574 530 572.500 521 573 513 568 511 565 506 563 505 558 502 553 500 545 502 540 506 536 506.500 529 505 526 500 522 498 519 488 514 480 510z"/>
          <path d="M756 545L762 544 770 546 774 550 784 551 790 549 795 546 805 543 799 546.500 790 552 783 553 772 551 762 549z"/>
        </g>
        <path d="M300 222L310 220 325 220 335 220.500 343 221 352 219.500 362 219 370 221 378 225 386 228.500 397 228.500 401 227 408 228.500 418 228 424 228.500 427 231 430 229 436 229.500 442 234 447 237.500 450 237 458 242 465 247.500 471 248.500 481 247.500 487 250 492 254 496 258 502 259 506 264 510 268.500 513 267 526 267 530 269.500 532 264 536 261.500 545 262 558 261.500 570 267 578 270 588 273 595 277.500 608 277.500 613 274 617 271 620 267 628 264 640 263.500 648 264.500 652 262.500 657 262.500 665 261.500 672 262 678 265 684 267.500 688 266 694 267 700 273 705 278 712 280 718 285 730 287 734 289 737 291 740 295.500 742 290 745 286 757 278 760 273 759 270 755 264 755.500 257 760 256 762 250 763 244 762.300 160H300z" fill="#fb1919" stroke="#d90d10"/>
        <path d="M512.500 191.500h43v30h-43z" fill="none" stroke="#ea2a14"/>
        <circle cx="512.500" cy="221" r="2.600" fill="#94125d"/>
        <g class="maplabel">
          <g fill="#b00e10"><text x="509.500" y="177.600">SANTA</text><text x="509.500" y="187.600">BARBARA</text><text x="509.500" y="197.600">COUNTY</text></g>
          <text x="373" y="564.500">SANTA</text><text x="373" y="574.500">BARBARA</text><text x="373" y="584.500">COUNTY</text>
          <text x="581.500" y="535">SANTA</text><text x="581.500" y="545">BARBARA</text><text x="581.500" y="555">COUNTY</text>
          <text x="938.500" y="370.300">VENTURA</text><text x="938.500" y="380.300">COUNTY</text>
          <g transform="rotate(-8 782 550)"><text x="781" y="549">VENTURA</text><text x="781" y="559">COUNTY</text></g>
        </g>
        <path d="M524 196.500v19M514.500 206h19" stroke="#000" stroke-width="4"/>
        <path d="M524 197.500v17M515.500 206h17" stroke="#fff" stroke-width="2"/>
      </svg>
    </div>
  </main>

  <footer class="status">
    <div class="field locate"><svg width="14" height="14" viewBox="0 0 14 14"><circle cx="6" cy="6" r="4.500" fill="none" stroke="#8a8a8a" stroke-width="1.500"/><path d="M9.500 9.500L13 13" stroke="#8a8a8a" stroke-width="2"/></svg>Type to locate (Ctrl+K)</div>
    <span class="clip legend">1 legend entries</span>
    <span class="clip mid coord">Coordinate</span>
    <div class="field xy">6002452,2008214</div>
    <svg class="sic track" viewBox="0 0 16 16"><path d="M2 3l5 8M6 1l3 6M1 8l6 4M10 5l5-4M9 3l4 0" stroke="#333" stroke-width="1.200"/><ellipse cx="6" cy="6" rx="2.700" ry="4.500" transform="rotate(-35 6 6)" fill="#aaa" stroke="#222"/><ellipse cx="11" cy="11" rx="3" ry="4" transform="rotate(-40 11 11)" fill="#eee" stroke="#222"/><path d="M8 12l6-3M4 5l4-2" stroke="#222"/></svg>
    <span class="clip mid scale">Scale</span>
    <div class="field combo"><span>1:603815</span><i class="cbtn"><i class="dn"></i></i></div>
    <svg class="sic lock" viewBox="0 0 14 16"><path d="M3.500 8V4.500c0-4 7-4 7 0V8" fill="none" stroke="#888" stroke-width="1.700"/><path d="M1 8h12v5.500l-1.500 1.500h-9L1 13.500z" fill="#555"/></svg>
    <span class="clip mid magn">Magnifier</span>
    <div class="field spin mag"><span>100%</span><i class="sp"><i class="up"></i><i class="dn"></i></i></div>
    <span class="clip mid rot">Rotation</span>
    <div class="field spin deg"><span>0.0 °</span><i class="sp"><i class="up"></i><i class="dn"></i></i></div>
    <span class="chk on"><svg viewBox="0 0 12 12"><path d="M2.500 6.500l2.500 3L9 2" fill="none" stroke="#000" stroke-width="2.200"/></svg></span>
    <span class="render">Render</span>
    <svg class="sic crs" viewBox="0 0 16 16"><path d="M8 .8l4 1.500L14.800 8 12 13.500 8 15.200l-4-1.700L1.200 8 4 2.300z" fill="#777"/><path d="M0 8h16M2 5h12M3 11.500h10M8 1v14M5 2c-2 4-2 8 0 12M11 2c2 4 2 8 0 12" stroke="#c9c6c2" stroke-width=".8" fill="none"/><path d="M0 8h16" stroke="#666"/></svg>
    <span class="epsg">EPSG:2229</span>
    <svg class="sic msg" viewBox="0 0 16 16"><path d="M5 1h6c3 0 5 2 5 5.500S14 12 12.500 12l1.500 3.500L8.500 12H5C2 12 0 10 0 6.500S2 1 5 1z" fill="#5b5b5b"/><circle cx="4.500" cy="6.500" r="1.100" fill="#fff"/><circle cx="8" cy="6.500" r="1.100" fill="#fff"/><circle cx="11.500" cy="6.500" r="1.100" fill="#fff"/></svg>
    <svg class="sizer" width="12" height="12"><path d="M10 1h1M7 4h1M10 4h1M4 7h1M7 7h1M10 7h1M1 10h1M4 10h1M7 10h1M10 10h1" stroke="#aaa59f"/></svg>
  </footer>
</div>
</body>
</html>
```
FILE: styles.css
```css
* { box-sizing: border-box; }
body {
  margin: 0;
  font: 12px/16px "DejaVu Sans", sans-serif;
  color: #111;
  background: #e6e7ec;
}
i, b { font-style: normal; font-weight: normal; }
svg { display: block; flex: none; }
.defs { position: absolute; }
.window {
  width: 1117px;
  height: 706px;
  padding: 0 1px 3px;
  overflow: hidden;
  display: flex;
  flex-direction: column;
}
.titlebar {
  height: 28px;
  flex: none;
  display: flex;
  align-items: center;
  justify-content: space-between;
  border-top: 1px solid #f4f5f7;
  padding: 0 8.500px 1px 455px;
}
.caption { color: #6c758a; font-weight: bold; }
.winbtns { display: flex; gap: 19px; }

.menubar {
  height: 19px;
  flex: none;
  background: #efebe7;
  border-bottom: 1px solid #c9c6c1;
  display: flex;
  gap: 14.750px;
  padding: 1px 0 0 10px;
}
u { text-underline-offset: 2px; text-decoration-thickness: 1px; }

.toolbar {
  height: 39px;
  flex: none;
  display: flex;
  align-items: center;
  background: linear-gradient(#f8f5f2, #eeeae6);
  border-bottom: 1px solid #b9b5b0;
}
.toolbar.third { height: 38px; padding-bottom: 1px; }
.tool {
  width: 33px;
  height: 32px;
  flex: none;
  display: flex;
  align-items: center;
  justify-content: center;
}
.tool svg { width: 24px; height: 24px; overflow: visible; }
.tool.on { background: #dad7d3; border: 1px solid #a8a5a1; border-radius: 3px; width: 32px; margin-right: 1px; }
.grip {
  flex: none;
  width: 15px;
  height: 18px;
  padding: 0 4px 0 5px;
  background: radial-gradient(circle at 1px 1px, #b0aba4 .5px, transparent .9px) 0 0 / 3px 3px content-box;
}
.grip.first { width: 12px; padding: 0 2px 0 4px; }
.grip.g17 { width: 17px; padding: 0 4px 0 7px; }
.grip.g16 { width: 16px; padding: 0 3px 0 7px; }
.drop {
  flex: none;
  width: 12px;
  height: 5px;
  background: #3d3d3d;
  clip-path: polygon(1px 0, 11px 0, 6px 5px);
}
.drop.off { background: #c0bdb9; }
.more { margin-left: 19px; }

.abc { font: bold 7.500px "DejaVu Sans", sans-serif; text-anchor: middle; fill: #4a4000; }
.one { font: bold 8px "DejaVu Sans", sans-serif; text-anchor: middle; fill: #777; letter-spacing: -.5px; }
.info { font: italic bold 15px "Liberation Serif", serif; text-anchor: middle; fill: #fff; }
.info.small { font-size: 12px; }
.help { font: 17px "Liberation Serif", serif; text-anchor: middle; fill: #fff; }

.work { flex: 1; min-height: 0; display: flex; background: #efebe7; padding-top: 1px; }
.side { width: 294px; display: flex; flex-direction: column; }
.dockhead { height: 20px; flex: none; display: flex; align-items: center; gap: 3px; padding: 0 2px 0 4px; }
.dockhead span { flex: 1; }
.dockhead svg { width: 11px; height: 11px; }
.dockhead svg use { width: 11px; height: 11px; }
.docktools { height: 30px; flex: none; display: flex; align-items: center; gap: 9.200px; padding: 0 0 2px 7.500px; }
.docktools svg { width: 16px; height: 16px; }
.docktools .drop { margin: 0 -2px 0 -7px; }
.docktools.layers { height: 30px; padding-bottom: 2px; }

.browser { height: 254px; flex: none; display: flex; background: #fff; border: 1px solid #b3afab; }
.tree { flex: 1; overflow: hidden; }
.row { height: 16px; display: flex; align-items: center; width: 264px; white-space: nowrap; }
.tw { width: 10px; height: 10px; flex: none; margin-right: 9px; }
.ic { width: 16px; height: 16px; margin-right: 6px; }
.l0 { padding-left: 4px; }
.l1 { padding-left: 24px; }
.l2 { padding-left: 44px; }
.l3 { padding-left: 64px; }
.l4 { padding-left: 84px; }
.l5 { padding-left: 104px; }
.sel { background: #308cc6; color: #fff; }
.dim { opacity: .6; }
.scroll { width: 14px; border-left: 1px solid #b3afab; background: #e3dfdb; display: flex; flex-direction: column; }
.sbtn { height: 14px; display: flex; align-items: center; justify-content: center; background: #f5f3f0; border-bottom: 1px solid #b3afab; }
.sbtn.end { margin-top: auto; border-bottom: 0; border-top: 1px solid #b3afab; }
.thumb { height: 91px; background: linear-gradient(90deg, #fff, #f3f0ed); border-bottom: 1px solid #b3afab; }
.up, .dn { display: block; width: 8px; height: 4px; background: #444; clip-path: polygon(0 100%, 50% 0, 100% 100%); }
.dn { clip-path: polygon(0 0, 100% 0, 50% 100%); }

.hsplit {
  height: 5px;
  flex: none;
  width: 17px;
  margin-left: 139px;
  background: radial-gradient(circle at 1px 1px, #b0aba4 .5px, transparent .9px) 0 1px / 3px 3px repeat-x;
}
.dockhead.second { height: 21px; }
.layertree { flex: 1; background: #fff; border: 1px solid #b3afab; }
.lrow { height: 16px; display: flex; align-items: center; padding-left: 4px; color: #bfbfbf; font-weight: bold; }
.lrow.act { background: #308cc6; color: #fff; }
.chk { width: 14px; height: 14px; flex: none; background: #fff; border: 1px solid #bdb9b5; }
.chk svg { width: 12px; height: 12px; }
.sw { width: 16px; height: 16px; margin-right: 6px; border: 1px solid #7a5b69; }
.lrow .sw, .lrow .ic { margin-left: 6px; }
.rose { background: #b37a90; }
.violet { background: #997cb9; border-color: #74609a; }
.band { height: 20px; display: flex; align-items: center; padding-left: 45px; font: 9px/12px "Liberation Sans", sans-serif; letter-spacing: -.58px; color: #000; }
.cb { width: 16px; height: 14px; border: 1px solid #555; margin-right: 3px; }
.nm { width: 25px; }
.nm.g { width: 26px; }
.nm.b { width: 24px; }
.red { background: #f00; }
.green { background: #0f0; }
.blue { background: #00f; }

.vsplit { width: 6px; display: flex; align-items: center; }
.vsplit i { width: 3px; height: 17px; margin-left: 2px; background: radial-gradient(circle at 1px 1px, #b0aba4 .5px, transparent .9px) 0 0 / 3px 3px; }
.canvas { width: 815px; border: 1px solid #b3afab; background: #fff; overflow: hidden; }
.maplabel { font: 9px "DejaVu Sans", sans-serif; text-anchor: middle; fill: #1a1012; }

.status { height: 28px; flex: none; display: flex; align-items: center; background: #efebe7; white-space: nowrap; }
.field { height: 21px; flex: none; background: #fff; border: 1px solid #a9a6a1; border-radius: 3px; display: flex; align-items: center; }
.field > span { flex: 1; padding-left: 4px; }
.locate { width: 220px; margin-left: 4px; padding-left: 7px; gap: 8px; color: #7f7f7f; }
.clip { overflow: hidden; flex: none; }
.mid { display: flex; justify-content: center; }
.legend { width: 21px; margin-left: 8px; }
.coord { width: 44px; margin-left: 8px; }
.xy { width: 121px; margin-left: 3px; padding-left: 4px; }
.sic { width: 16px; height: 16px; }
.track { margin-left: 4px; }
.scale { width: 13px; margin-left: 11px; }
.combo { width: 96px; margin-left: 2px; }
.cbtn { width: 19px; height: 19px; border-left: 1px solid #a9a6a1; display: flex; align-items: center; justify-content: center; }
.lock { width: 14px; margin-left: 5px; }
.magn { width: 36px; margin-left: 13px; }
.spin { margin-left: 3px; }
.mag { width: 95px; }
.mag > span { padding-left: 5px; }
.sp { width: 14px; height: 19px; border-left: 1px solid #a9a6a1; display: flex; flex-direction: column; align-items: center; justify-content: center; gap: 4px; }
.rot { width: 30px; margin-left: 8px; }
.deg { width: 91px; margin-left: 9px; margin-right: 6px; }
.deg > span { padding-left: 5px; }
.render { margin-left: 5px; }
.crs { margin-left: 18px; }
.epsg { margin-left: 4px; }
.msg { margin-left: 22px; }
.sizer { margin-left: auto; align-self: flex-end; }
```
